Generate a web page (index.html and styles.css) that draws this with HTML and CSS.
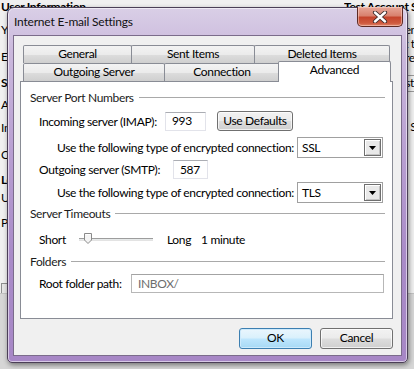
FILE: index.html
```html
<!DOCTYPE html>
<html lang="en">
<head>
    <meta charset="UTF-8">
    <title>Internet E-mail Settings</title>
    <link rel="stylesheet" href="styles.css">
</head>
<body>
    <div class="backdrop">
        <div class="bg-col bg-left">
            <div class="bg-head">User Information</div>
            <div class="bg-line l1">Your Name:</div>
            <div class="bg-line l2">E-mail Address:</div>
            <div class="bg-head l3">Server Information</div>
            <div class="bg-line l4">Account Type:</div>
            <div class="bg-line l5">Incoming mail server:</div>
            <div class="bg-line l6">Outgoing mail server (SMTP):</div>
            <div class="bg-head l7">Logon Information</div>
            <div class="bg-line l8">User Name:</div>
            <div class="bg-line l9">Password:</div>
            <div class="bg-check"></div>
        </div>
        <div class="bg-col bg-right">
            <div class="bg-head">Test Account Settings</div>
            <div class="bg-line r1">We recommend that you test out</div>
            <div class="bg-line">your account to ensure that</div>
            <div class="bg-line">the entries are correct.</div>
            <div class="bg-btn">Test Account Settings</div>
            <div class="bg-line r2">Test Account Settings by clicking</div>
        </div>
        <div class="bg-footer"></div>
    </div>

    <div class="dialog">
        <div class="titlebar">
            <span class="title">Internet E-mail Settings</span>
            <button class="close-btn" aria-label="Close">
                <svg width="16" height="12" viewBox="0 0 16 12">
                    <path d="M3 1.5 L13 10.5 M13 1.5 L3 10.5" stroke="#3a2a2a" stroke-width="4.2" stroke-linecap="round"/>
                    <path d="M3 1.5 L13 10.5 M13 1.5 L3 10.5" stroke="#ffffff" stroke-width="2.4" stroke-linecap="round"/>
                </svg>
            </button>
        </div>
        <div class="client">
            <div class="tabs">
                <div class="tab-row">
                    <div class="tab w-general">General</div>
                    <div class="tab w-sent">Sent Items</div>
                    <div class="tab w-deleted">Deleted Items</div>
                </div>
                <div class="tab-row">
                    <div class="tab w-outgoing">Outgoing Server</div>
                    <div class="tab w-connection">Connection</div>
                    <div class="tab tab-active">Advanced</div>
                </div>
            </div>
            <div class="panel">
                <div class="group-title">Server Port Numbers</div>

                <div class="row row-in">
                    <span class="label lbl-imap">Incoming server (IMAP):</span>
                    <input class="textbox port-in" type="text" value="993">
                    <button class="btn btn-defaults">Use Defaults</button>
                </div>
                <div class="row row-enc">
                    <span class="label lbl-enc">Use the following type of encrypted connection:</span>
                    <div class="combo">
                        <span class="combo-value">SSL</span>
                        <span class="combo-arrow"><svg width="7" height="4" viewBox="0 0 7 4"><path d="M0 0 H7 L3.5 4 Z" fill="#000"/></svg></span>
                    </div>
                </div>
                <div class="row row-out">
                    <span class="label lbl-smtp">Outgoing server (SMTP):</span>
                    <input class="textbox port-out" type="text" value="587">
                </div>
                <div class="row row-enc2">
                    <span class="label lbl-enc">Use the following type of encrypted connection:</span>
                    <div class="combo">
                        <span class="combo-value">TLS</span>
                        <span class="combo-arrow"><svg width="7" height="4" viewBox="0 0 7 4"><path d="M0 0 H7 L3.5 4 Z" fill="#000"/></svg></span>
                    </div>
                </div>

                <div class="group-title gt-timeouts">Server Timeouts</div>
                <div class="row row-slider">
                    <span class="label lbl-short">Short</span>
                    <div class="slider">
                        <div class="slider-track"></div>
                        <svg class="slider-thumb" width="8" height="11" viewBox="0 0 8 11">
                            <path d="M0.5 0.5 H7.5 V7 L4 10.5 L0.5 7 Z" fill="#f4f4f4" stroke="#8a8a8a"/>
                            <path d="M1.5 1.5 H6.5" stroke="#ffffff"/>
                        </svg>
                    </div>
                    <span class="lbl-long">Long</span>
                    <span class="lbl-minute">1 minute</span>
                </div>

                <div class="group-title gt-folders">Folders</div>
                <div class="row row-root">
                    <span class="label lbl-root">Root folder path:</span>
                    <input class="textbox root-path" type="text" value="INBOX/">
                </div>
            </div>
            <div class="footer">
                <button class="btn btn-default">OK</button>
                <button class="btn">Cancel</button>
            </div>
        </div>
    </div>
</body>
</html>
```

FILE: styles.css
```css
* {
    box-sizing: border-box;
}
body {
    margin: 0;
    width: 414px;
    height: 369px;
    overflow: hidden;
    position: relative;
    font-family: Lato, "Noto Sans", sans-serif;
    font-size: 12px;
    letter-spacing: -0.35px;
    color: #000;
}

/* window underneath */
.backdrop {
    width: 414px;
    height: 369px;
    background: #f0f0f0;
    display: flex;
    position: relative;
    overflow: hidden;
}
.bg-col {
    display: flex;
    flex-direction: column;
    font-size: 12px;
    line-height: 14px;
    white-space: nowrap;
    flex-shrink: 0;
}
.bg-left {
    width: 344px;
    padding: 0 0 0 1px;
}
.bg-right {
    width: 70px;
    overflow: hidden;
}
.bg-head {
    font-weight: bold;
}
.bg-line {
    color: #000;
}
.l1 { margin-top: 9px; }
.l2 { margin-top: 13px; }
.l3 { margin-top: 12px; }
.l4 { margin-top: 8px; }
.l5 { margin-top: 9px; }
.l6 { margin-top: 13px; }
.l7 { margin-top: 11px; }
.l8 { margin-top: 4px; }
.l9 { margin-top: 11px; }
.bg-check {
    margin-top: 53px;
    width: 10px;
    height: 13px;
    border: 1px solid #8e8f8f;
    background: #e6e6e6;
}
.r1 { margin-top: 9px; }
.bg-btn {
    margin-top: 10px;
    height: 17px;
    border-top: 1px solid #9a9a9a;
    border-bottom: 1px solid #9a9a9a;
    padding-left: 50px;
}
.r2 { margin-top: 28px; }
.bg-footer {
    position: absolute;
    left: 0;
    right: 0;
    bottom: 0;
    height: 76px;
    background: #d6d6d6;
    border-top: 1px solid #c2c2c2;
}

/* dialog */
.dialog {
    position: absolute;
    left: 7px;
    top: 7px;
    width: 401px;
    height: 356px;
    border: 1px solid #4b3f57;
    border-radius: 7px 7px 5px 5px;
    background: linear-gradient(180deg, #d9cfe6 0%, #cbb9dd 12%, #b9a0d2 40%, #a98bc8 70%, #a787c6 100%);
    box-shadow: 1px 2px 5px rgba(0, 0, 0, 0.45), inset 0 0 0 1px rgba(255, 255, 255, 0.55);
    padding: 0 5px 6px 5px;
    display: flex;
    flex-direction: column;
}
.titlebar {
    height: 27px;
    display: flex;
    align-items: flex-start;
    position: relative;
}
.title {
    margin-top: 6px;
    padding-left: 1px;
    font-size: 12px;
    letter-spacing: -0.2px;
    color: #111;
}
.close-btn {
    position: absolute;
    right: -1px;
    top: -1px;
    width: 46px;
    height: 20px;
    border: 1px solid #5e2a24;
    border-top: none;
    border-radius: 0 0 5px 5px;
    background: linear-gradient(180deg, #e7a89a 0%, #d9826f 45%, #c5452d 55%, #cf5a3f 85%, #e0876c 100%);
    box-shadow: inset 0 0 0 1px rgba(255, 220, 210, 0.5);
    display: flex;
    align-items: center;
    justify-content: center;
    padding: 0;
}
.client {
    flex: 1;
    background: #f0f0f0;
    border: 1px solid #7b6c8b;
    padding: 9px 8px 0 6px;
    display: flex;
    flex-direction: column;
}

/* tabs */
.tabs {
    display: flex;
    flex-direction: column;
    padding-left: 3px;
}
.tab-row {
    display: flex;
    height: 18px;
    align-items: flex-end;
}
.tab {
    height: 18px;
    border: 1px solid #898c95;
    border-bottom: none;
    border-radius: 2px 2px 0 0;
    background: linear-gradient(180deg, #f3f3f3 0%, #ebebeb 50%, #dddddd 51%, #cfcfcf 100%);
    display: flex;
    align-items: center;
    justify-content: center;
    color: #000;
    margin-right: -1px;
    line-height: 1;
    padding-bottom: 1px;
}
.w-general { width: 109px; }
.w-sent { width: 124px; }
.w-deleted { width: 136px; }
.w-outgoing { width: 142px; }
.w-connection { width: 116px; }
.tab-active {
    width: 113px;
    height: 21px;
    margin-left: -1px;
    margin-bottom: -1px;
    background: #ffffff;
    position: relative;
    z-index: 1;
    align-items: flex-start;
    padding-top: 2px;
}

/* panel */
.panel {
    height: 238px;
    background: #ffffff;
    border: 1px solid #898c95;
    padding: 0 7px 0 9px;
    display: flex;
    flex-direction: column;
}
.group-title {
    height: 16px;
    margin-top: 7px;
    display: flex;
    align-items: center;
    gap: 5px;
    color: #1c1c1c;
}
.group-title::after {
    content: "";
    flex: 1;
    height: 1px;
    background: #a9a9a9;
    margin-top: 1px;
}
.gt-timeouts { margin-top: 2px; }
.gt-folders { margin-top: 4px; }

.row {
    display: flex;
    align-items: center;
    padding-left: 9px;
}
.row-in { height: 20px; margin-top: 6px; }
.row-enc { height: 21px; margin-top: 6px; padding-left: 27px; }
.row-out { height: 19px; margin-top: 2px; }
.row-enc2 { height: 21px; margin-top: 3px; padding-left: 27px; }
.row-slider { height: 20px; margin-top: 8px; }
.row-root { height: 19px; margin-top: 5px; }

.label {
    white-space: nowrap;
    flex-shrink: 0;
}
.lbl-imap { width: 126px; }
.lbl-smtp { width: 134px; }
.lbl-enc { width: 240px; }
.lbl-root { width: 92px; }
.lbl-short { width: 40px; }

.textbox {
    height: 19px;
    border: 1px solid #e2e3ea;
    border-top-color: #abadb3;
    font: inherit;
    letter-spacing: inherit;
    padding: 0 0 1px 6px;
    background: #fff;
    color: #000;
    outline: none;
}
.port-in { width: 41px; }
.port-out { width: 35px; padding-left: 6px; }
.root-path {
    width: 253px;
    color: #6d6d6d;
    border-color: #b7b7b7;
    border-top-color: #a3a3a3;
}

.btn {
    font: inherit;
    letter-spacing: inherit;
    color: #000;
    height: 20px;
    border: 1px solid #707070;
    border-radius: 3px;
    background: linear-gradient(180deg, #f2f2f2 0%, #ebebeb 48%, #dddddd 52%, #cfcfcf 100%);
    box-shadow: inset 0 0 0 1px rgba(255, 255, 255, 0.7);
    padding: 0 0 1px;
    line-height: 1;
}
.btn-defaults {
    width: 76px;
    margin-left: 11px;
}

.combo {
    width: 86px;
    height: 21px;
    border: 1px solid #a0a0a0;
    background: #fff;
    display: flex;
    align-items: center;
    padding: 1px 1px 1px 4px;
}
.combo-value {
    flex: 1;
    padding-bottom: 1px;
}
.combo-arrow {
    width: 17px;
    height: 17px;
    border: 1px solid #6f6f6f;
    background: #e9e9e9;
    box-shadow: inset 1px 1px 0 #ffffff, inset -1px -1px 0 #c4c4c4;
    display: flex;
    align-items: center;
    justify-content: center;
    padding-top: 1px;
}

.slider {
    width: 74px;
    height: 14px;
    position: relative;
    display: flex;
    align-items: center;
}
.slider-track {
    width: 100%;
    height: 3px;
    border-top: 1px solid #9d9d9d;
    border-bottom: 1px solid #e3e3e3;
    background: #e7eaea;
}
.slider-thumb {
    position: absolute;
    left: 5px;
    top: 1px;
}
.lbl-long {
    margin-left: 14px;
}
.lbl-minute {
    margin-left: 10px;
}

.footer {
    display: flex;
    justify-content: flex-end;
    gap: 8px;
    padding-top: 9px;
}
.footer .btn {
    width: 73px;
    height: 21px;
}
.btn-default {
    border-color: #3c7fb1;
    background: linear-gradient(180deg, #eaf6fd 0%, #d9f0fc 48%, #bee6fd 52%, #a7d9f5 100%);
    box-shadow: inset 0 0 0 1px #cdeafc;
}
```
